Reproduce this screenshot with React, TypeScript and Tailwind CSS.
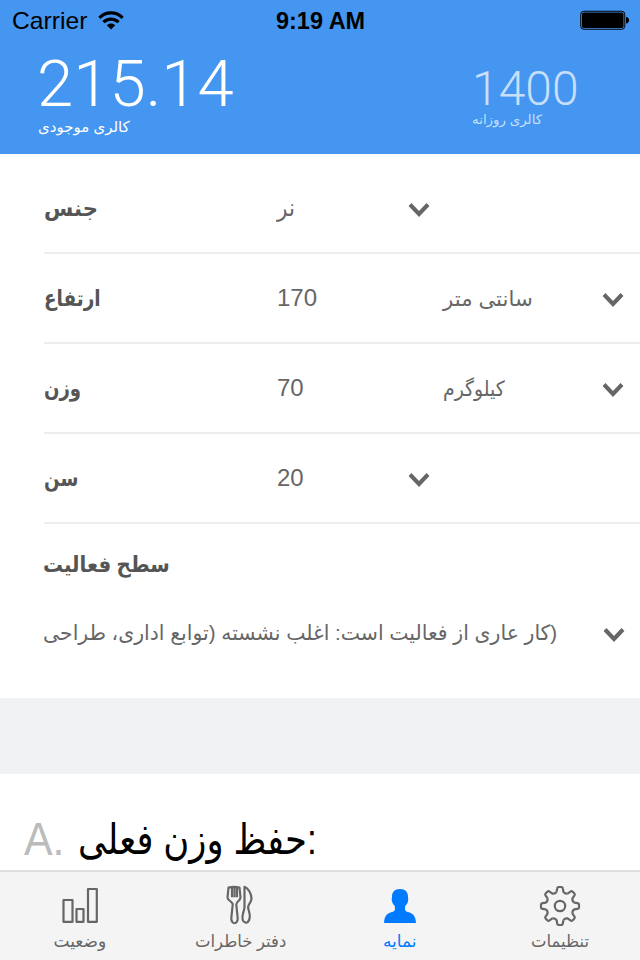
import { useLayoutEffect, useRef, useState } from "react";
import type { ReactNode } from "react";

/* Single-line text squeezed or stretched horizontally to a given width. */
function FitText({ width, className = "", dir, children }: { width: number; className?: string; dir?: "rtl"; children: ReactNode }) {
  const ref = useRef<HTMLSpanElement>(null);
  const [scale, setScale] = useState(1);
  useLayoutEffect(() => {
    if (ref.current) setScale(width / ref.current.offsetWidth);
  }, [width]);
  return (
    <div className={`shrink-0 whitespace-nowrap ${className}`} style={{ width }}>
      <span ref={ref} dir={dir} className="inline-block origin-left" style={{ transform: `scaleX(${scale})` }}>
        {children}
      </span>
    </div>
  );
}

function Chevron() {
  return (
    <svg className="mt-[3px] block h-[16px] w-[22px] shrink-0" viewBox="0 0 22 16" fill="none" stroke="#666" strokeWidth="4">
      <path d="M2 2.5 11 12 20 2.5" />
    </svg>
  );
}

type RowProps = { label: string; labelWidth: number; value: string; valueWidth: number; unit?: string; unitWidth?: number };

function Row({ label, labelWidth, value, valueWidth, unit, unitWidth = 0 }: RowProps) {
  return (
    <div className="ml-[44px] flex h-[90px] items-center border-b-2 border-[#ededed] text-[#666]">
      <div className="w-[233px]">
        <FitText width={labelWidth} className="pt-[2px] text-[22px] leading-[30px] font-bold text-[#555]">{label}</FitText>
      </div>
      <div className={unit ? "w-[166px]" : "w-[131px]"}>
        <FitText width={valueWidth} className="text-[24px] leading-[30px]">{value}</FitText>
      </div>
      {unit && (
        <div className="w-[159px]">
          <FitText width={unitWidth} className="pt-[2px] text-[21px] leading-[30px]">{unit}</FitText>
        </div>
      )}
      <Chevron />
    </div>
  );
}

function StatusBar() {
  return (
    <div className="flex h-[40px] items-center text-black">
      <div className="flex w-[276px] items-center pl-[12px]">
        <FitText width={75} className="pt-[2px] text-[24px] leading-[28px]">Carrier</FitText>
        <svg className="ml-[11px] h-[19px] w-[26px]" viewBox="0 0 26 19" fill="none" stroke="#000" strokeWidth="3.2">
          <path d="M1.4 6.8C8 .3 18 .3 24.6 6.8M5.4 11.1c4.2-4.1 11-4.1 15.2 0" />
          <path d="M8.8 14.2c2.4-2.2 6-2.2 8.4 0L13 18.4Z" fill="#000" stroke="none" />
        </svg>
      </div>
      <FitText width={89} className="pt-[2px] text-[24px] leading-[28px] font-bold">9:19 AM</FitText>
      <svg className="ml-[215px] h-[20px] w-[50px]" viewBox="0 0 50 20">
        <rect x=".75" y="1.25" width="44" height="18" rx="3" fill="none" stroke="#000" />
        <rect x="2" y="2.5" width="41.5" height="15.5" rx="1.8" />
        <path d="M46 7c2 0 3 1.3 3 3.2s-1 3.3-3 3.3Z" />
      </svg>
    </div>
  );
}

function Tab({ label, width, active, children }: { label: string; width: number; active?: boolean; children: ReactNode }) {
  return (
    <div className={`flex w-[160px] flex-col items-center ${active ? "text-[#007aff]" : "text-[#666]"}`}>
      <svg className="mt-[12px] block size-[44px]" viewBox="0 0 44 44" fill="none" stroke="currentColor" strokeWidth="2.2" strokeLinejoin="round">
        {children}
      </svg>
      <FitText width={width} className="mt-[1px] text-[17px] leading-[26px]">{label}</FitText>
    </div>
  );
}

/* One tooth and the valley after it; eight of them make the gear. */
const TOOTH = "M-3.4-14.200-2.800-17.500Q-2.600-19-1.400-19H1.400Q2.600-19 2.800-17.500L3.400-14.200Q5-12 7.640-12.440";

export default function App() {
  return (
    <div dir="ltr" className="flex h-[960px] w-[640px] flex-col overflow-hidden bg-white font-['Liberation_Sans','DejaVu_Sans',sans-serif]">
      <header className="h-[154px] shrink-0 bg-[#4596f1]">
        <StatusBar />
        <div className="flex text-white">
          <div className="w-[434px] pl-[37px] pt-[13px]">
            <FitText width={197} className="font-[Roboto] text-[64px] leading-[64px] font-light">215.14</FitText>
            <FitText width={92} className="pl-[1px] text-[15px] leading-[20px]">کالری موجودی</FitText>
          </div>
          <div className="pl-[38px] pt-[24px] text-[#c7dffb]">
            <FitText width={107} className="font-[Roboto] text-[48px] leading-[49px] font-light">1400</FitText>
            <FitText width={70} className="text-[13px] leading-[14px]">کالری روزانه</FitText>
          </div>
        </div>
      </header>

      <main className="h-[544px] shrink-0 pt-[10px]">
        <Row label="جنس" labelWidth={54} value="نر" valueWidth={18} />
        <Row label="ارتفاع" labelWidth={57} value="170" valueWidth={40} unit="سانتی متر" unitWidth={90} />
        <Row label="وزن" labelWidth={37} value="70" valueWidth={27} unit="کیلوگرم" unitWidth={62} />
        <Row label="سن" labelWidth={34} value="20" valueWidth={27} />
        <div className="pl-[43px] pt-[26px] text-[#666]">
          <FitText width={127} className="text-[22px] leading-[30px] font-bold text-[#555]">سطح فعالیت</FitText>
          <div className="mt-[38px] flex items-center">
            <div className="w-[560px]">
              <FitText dir="rtl" width={514} className="text-[21px] leading-[30px]">(کار عاری از فعالیت است: اغلب نشسته (توابع اداری، طراحی</FitText>
            </div>
            <Chevron />
          </div>
        </div>
      </main>

      <div className="h-[76px] shrink-0 bg-[#f1f2f4]" />

      <section className="flex h-[96px] shrink-0 pl-[24px] pt-[36px]">
        <FitText width={40} className="text-[46px] leading-[58px] text-[#bbb]">A.</FitText>
        <FitText width={239} className="ml-[14px] text-[42px] leading-[60px] text-black">حفظ وزن فعلی:</FitText>
      </section>

      <nav className="flex h-[90px] shrink-0 border-t-2 border-[#dedede] bg-[#f4f4f4]">
        <Tab label="وضعیت" width={53}>
          <path d="M5.500 16h9V37.800h-9ZM18.500 25h7V37.800h-7ZM30 5h8.800V37.800H30Z" />
        </Tab>
        <Tab label="دفتر خاطرات" width={91}>
          <path d="M10.500 3.500c3-.7 8-.7 11 0l1 10c0 3-4.200 4-4.200 7l1.400 13.500c.1 7-6.500 7-6.400 0l1.400-13.500c0-3-5.200-4-5.200-7ZM14 4v9.200M16.500 4v9.200M19 4v9.200" />
          <path d="M26.500 2.800c4 1.500 7 7.200 7 12 0 4-3.600 5-3.400 8.500.3 3.800 2.200 5.700 1.600 10.200-.5 4-2.500 5.500-4.500 5-3-.7-3.200-4.500-2.200-9 .5-2 1.500-4 1.500-6.500Z" />
        </Tab>
        <Tab label="نمایه" width={34} active>
          <path d="M22 5c-5.300 0-8 3-8 7.500 0 2-.6 2 0 5 .6 2 1.400 3.200 2.800 4.400.4 3.600.4 5-2.800 6.200-4.500 1.500-7.500 3.200-8 10.800h32c-.5-7.600-3.500-9.300-8-10.800-3.200-1.200-3.200-2.600-2.800-6.200 1.400-1.200 2.200-2.400 2.800-4.400.6-3 0-3 0-5C30 8 27.300 5 22 5Z" fill="currentColor" stroke="none" />
        </Tab>
        <Tab label="تنظیمات" width={58}>
          <circle cx="22" cy="22" r="5.2" />
          {[0, 45, 90, 135, 180, 225, 270, 315].map((angle) => (
            <path key={angle} d={TOOTH} transform={`translate(22 22) rotate(${angle})`} />
          ))}
        </Tab>
      </nav>
    </div>
  );
}
